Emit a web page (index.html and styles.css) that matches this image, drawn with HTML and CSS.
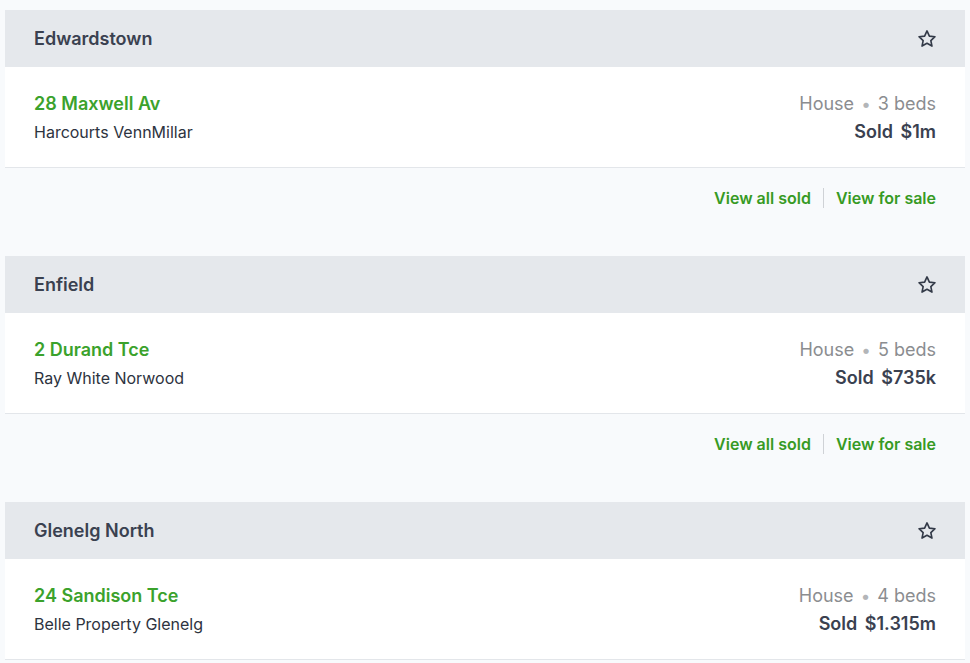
FILE: index.html
```html
<!DOCTYPE html>
<html lang="en">
<head>
  <meta charset="UTF-8">
  <meta name="viewport" content="width=device-width, initial-scale=1.0">
  <title>Sold properties</title>
  <link rel="stylesheet" href="styles.css">
</head>
<body>

  <div class="suburb">
    <div class="suburb-head">
      <h2>Edwardstown</h2>
      <button class="fav" aria-label="Save suburb">
        <svg width="22" height="22" viewBox="0 0 24 24"><path d="M12 3.2l2.6 5.6 6.1.7-4.5 4.2 1.2 6-5.4-3-5.4 3 1.2-6-4.5-4.2 6.1-.7z"/></svg>
      </button>
    </div>
    <div class="listing">
      <div>
        <a class="address" href="#">28 Maxwell Av</a>
        <div class="agency">Harcourts VennMillar</div>
      </div>
      <div class="details">
        <div class="type">House <span class="dot">&bull;</span> 3 beds</div>
        <div class="price">Sold $1m</div>
      </div>
    </div>
    <div class="links">
      <a href="#">View all sold</a>
      <span class="sep"></span>
      <a href="#">View for sale</a>
    </div>
  </div>

  <div class="suburb">
    <div class="suburb-head">
      <h2>Enfield</h2>
      <button class="fav" aria-label="Save suburb">
        <svg width="22" height="22" viewBox="0 0 24 24"><path d="M12 3.2l2.6 5.6 6.1.7-4.5 4.2 1.2 6-5.4-3-5.4 3 1.2-6-4.5-4.2 6.1-.7z"/></svg>
      </button>
    </div>
    <div class="listing">
      <div>
        <a class="address" href="#">2 Durand Tce</a>
        <div class="agency">Ray White Norwood</div>
      </div>
      <div class="details">
        <div class="type">House <span class="dot">&bull;</span> 5 beds</div>
        <div class="price">Sold $735k</div>
      </div>
    </div>
    <div class="links">
      <a href="#">View all sold</a>
      <span class="sep"></span>
      <a href="#">View for sale</a>
    </div>
  </div>

  <div class="suburb">
    <div class="suburb-head">
      <h2>Glenelg North</h2>
      <button class="fav" aria-label="Save suburb">
        <svg width="22" height="22" viewBox="0 0 24 24"><path d="M12 3.2l2.6 5.6 6.1.7-4.5 4.2 1.2 6-5.4-3-5.4 3 1.2-6-4.5-4.2 6.1-.7z"/></svg>
      </button>
    </div>
    <div class="listing">
      <div>
        <a class="address" href="#">24 Sandison Tce</a>
        <div class="agency">Belle Property Glenelg</div>
      </div>
      <div class="details">
        <div class="type">House <span class="dot">&bull;</span> 4 beds</div>
        <div class="price">Sold $1.315m</div>
      </div>
    </div>
  </div>

</body>
</html>
```

FILE: styles.css
```css
body {
  font-family: Inter, "Noto Sans", sans-serif;
  margin: 0;
  padding: 10px 5px 0;
  background-color: #f8fafc;
  color: #2d3340;
}

.suburb {
  margin-bottom: 28px;
}

.suburb-head {
  display: flex;
  align-items: center;
  justify-content: space-between;
  height: 57px;
  padding: 0 26px 0 29px;
  background-color: #e5e8ec;
}

.suburb-head h2 {
  margin: 0;
  font-size: 18px;
  font-weight: 600;
  color: #3a4150;
}

.fav {
  display: flex;
  padding: 1px;
  border: 0;
  background: none;
  cursor: pointer;
}

.fav svg {
  fill: none;
  stroke: #333a48;
  stroke-width: 1.8;
  stroke-linejoin: round;
}

.listing {
  display: flex;
  justify-content: space-between;
  align-items: center;
  height: 98px;
  padding: 2px 29px 0;
  background-color: #fff;
  border-bottom: 1px solid #e3e6ea;
}

.address {
  display: block;
  font-size: 18px;
  font-weight: 600;
  color: #3ba22c;
  text-decoration: none;
  line-height: 28px;
}

.agency {
  font-size: 16px;
  line-height: 28px;
  color: #2d3340;
}

.details {
  text-align: right;
}

.type {
  font-size: 18px;
  line-height: 28px;
  color: #8b8d90;
}

.dot {
  color: #b3b5b8;
  font-size: 17px;
  margin: 0 2px;
}

.price {
  font-size: 18px;
  font-weight: 600;
  line-height: 28px;
  word-spacing: 3px;
  color: #3a4150;
}

.links {
  display: flex;
  justify-content: flex-end;
  align-items: center;
  gap: 12px;
  padding: 20px 29px;
}

.links a {
  font-size: 16px;
  font-weight: 600;
  line-height: 20px;
  color: #379a24;
  text-decoration: none;
}

.sep {
  width: 1px;
  height: 20px;
  background-color: #cfd2d6;
}
```
